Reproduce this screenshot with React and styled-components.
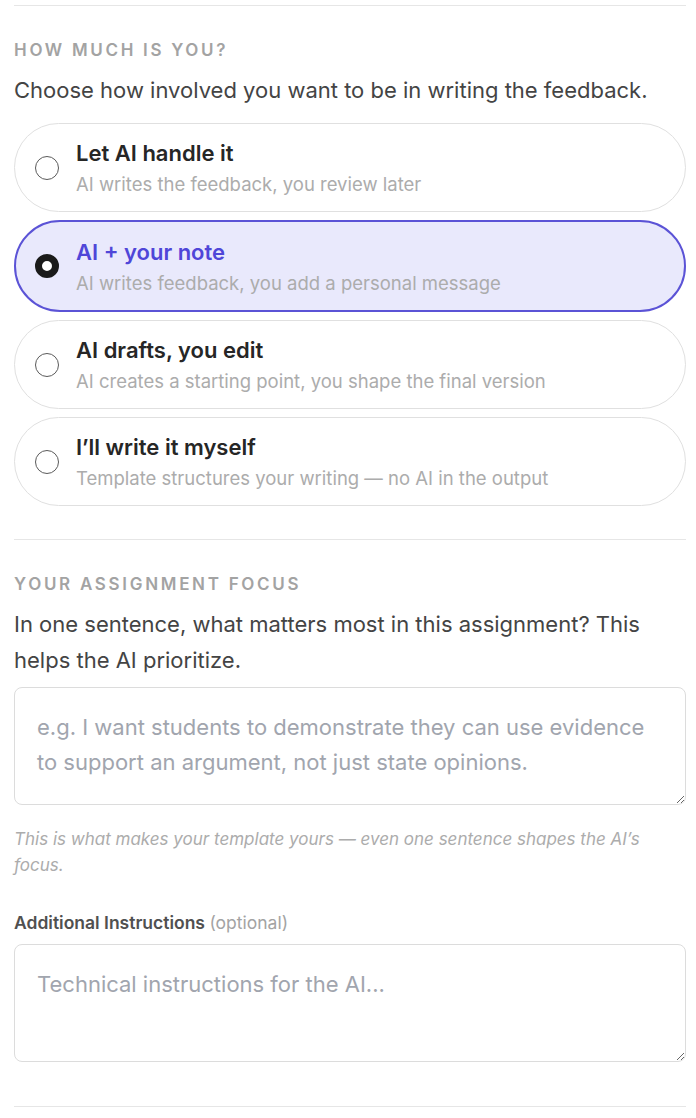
import { useState } from "react";
import styled, { createGlobalStyle } from "styled-components";

const GlobalStyle = createGlobalStyle`
  * {
    box-sizing: border-box;
  }
  body {
    margin: 0;
    background: #ffffff;
    font-family: Inter, "Noto Sans", "Liberation Sans", sans-serif;
    color: #3f3f3f;
  }
`;

const Page = styled.div`
  padding: 5px 10px 12px 14px;
`;

const Divider = styled.hr`
  margin: 0;
  border: none;
  border-top: 1px solid #e6e6e6;
`;

const Section = styled.section`
  padding: 33px 0 ${(props) => props.$bottom || 33}px;
`;

const Heading = styled.h3`
  margin: 0;
  font-size: 17px;
  line-height: 22px;
  font-weight: 600;
  letter-spacing: 2.7px;
  text-transform: uppercase;
  color: #a3a3a3;
`;

const Desc = styled.p`
  margin: 11px 0 9px;
  font-size: 22px;
  line-height: 36px;
  color: #444444;
`;

const Options = styled.div`
  display: flex;
  flex-direction: column;
  gap: 8px;
  margin-top: 15px;
`;

const Option = styled.label`
  display: flex;
  align-items: center;
  gap: 17px;
  height: ${(props) => (props.$active ? 92 : 89)}px;
  padding: 0 ${(props) => (props.$active ? 19 : 20)}px;
  border-radius: 46px;
  cursor: pointer;
  border: ${(props) => (props.$active ? "2px solid #5b53d6" : "1px solid #e0e0e0")};
  background: ${(props) => (props.$active ? "#e9e9fc" : "#ffffff")};
`;

const Radio = styled.span`
  flex: none;
  width: 24px;
  height: 24px;
  border-radius: 50%;
  border: ${(props) => (props.$checked ? "7px solid #1a1a1a" : "1px solid #5a5a5a")};
  background: #ffffff;
`;

const OptionText = styled.div`
  display: flex;
  flex-direction: column;
  gap: 5px;
`;

const OptionTitle = styled.span`
  font-size: 22px;
  line-height: 28px;
  font-weight: 600;
  color: ${(props) => (props.$active ? "#4f46d8" : "#262626")};
`;

const OptionSub = styled.span`
  font-size: 18.5px;
  line-height: 24px;
  color: #acacac;
`;

const TextArea = styled.textarea`
  display: block;
  width: 100%;
  height: 118px;
  padding: 22px 22px;
  border: 1px solid #dcdcdc;
  border-radius: 8px;
  font-family: inherit;
  font-size: 22px;
  line-height: 35px;
  color: #333333;
  outline: none;
  resize: vertical;

  &::placeholder {
    color: #a1a5ae;
  }
`;

const Hint = styled.p`
  margin: 21px 0 33px;
  font-size: 17px;
  line-height: 26px;
  font-style: italic;
  color: #acacac;
`;

const Label = styled.div`
  margin-bottom: 9px;
  font-size: 17.5px;
  line-height: 24px;
  font-weight: 600;
  color: #505050;
`;

const Optional = styled.span`
  font-weight: 400;
  color: #a3a3a3;
`;

const modes = [
  { id: "auto", title: "Let AI handle it", sub: "AI writes the feedback, you review later" },
  { id: "note", title: "AI + your note", sub: "AI writes feedback, you add a personal message" },
  { id: "draft", title: "AI drafts, you edit", sub: "AI creates a starting point, you shape the final version" },
  { id: "self", title: "I\u2019ll write it myself", sub: "Template structures your writing \u2014 no AI in the output" },
];

const App = () => {
  const [mode, setMode] = useState("note");

  return (
    <Page>
      <GlobalStyle />
      <Divider />
      <Section>
        <Heading>How much is you?</Heading>
        <Desc>Choose how involved you want to be in writing the feedback.</Desc>
        <Options>
          {modes.map((m) => (
            <Option key={m.id} $active={mode === m.id} onClick={() => setMode(m.id)}>
              <Radio $checked={mode === m.id} />
              <OptionText>
                <OptionTitle $active={mode === m.id}>{m.title}</OptionTitle>
                <OptionSub>{m.sub}</OptionSub>
              </OptionText>
            </Option>
          ))}
        </Options>
      </Section>
      <Divider />
      <Section $bottom={44}>
        <Heading>Your assignment focus</Heading>
        <Desc>
          In one sentence, what matters most in this assignment? This helps the AI prioritize.
        </Desc>
        <TextArea placeholder="e.g. I want students to demonstrate they can use evidence to support an argument, not just state opinions." />
        <Hint>
          This is what makes your template yours — even one sentence shapes the AI’s focus.
        </Hint>
        <Label>
          Additional Instructions <Optional>(optional)</Optional>
        </Label>
        <TextArea placeholder="Technical instructions for the AI..." />
      </Section>
      <Divider />
    </Page>
  );
};

export default App;
